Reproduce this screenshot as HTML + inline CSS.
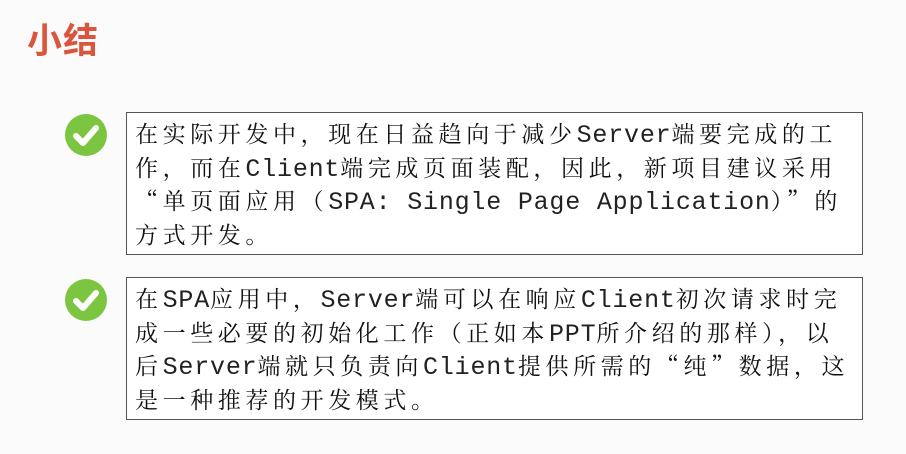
<!DOCTYPE html>
<html><head><meta charset="utf-8"><style>
body{margin:0;width:906px;height:454px;overflow:hidden;background:#fbfbfb;position:relative;font-family:"Noto Serif CJK SC","WenQuanYi Zen Hei",serif}
.t{position:absolute;left:27px;top:13px;font:bold 35px "Liberation Sans","Noto Sans CJK SC",sans-serif;color:#d9563c;letter-spacing:1px}
.box{position:absolute;left:126px;width:737px;height:143px;border:1.5px solid #555;background:#fff;box-sizing:border-box;padding:3px 0 0 8px}
.l{height:33.5px;line-height:33.5px;white-space:nowrap;font-size:23px;letter-spacing:4.6px;color:#111}
.m{font-family:"Liberation Mono",monospace;font-size:25px;letter-spacing:0.8px;color:#222}
.ck{position:absolute;left:65px;width:42px;height:42px;border-radius:50%;background:#7cc540}
.ck svg{position:absolute;left:0;top:0}
</style></head><body>
<div class="t">小结</div>
<div class="ck" style="top:114px"><svg width="42" height="42"><path d="M11 22 L18 29 L31 14" stroke="#fff" stroke-width="6" fill="none" stroke-linecap="round" stroke-linejoin="round"/></svg></div>
<div class="ck" style="top:279px"><svg width="42" height="42"><path d="M11 22 L18 29 L31 14" stroke="#fff" stroke-width="6" fill="none" stroke-linecap="round" stroke-linejoin="round"/></svg></div>
<div class="box" style="top:112px">
<div class="l">在实际开发中，现在日益趋向于减少<span class="m">Server</span>端要完成的工</div>
<div class="l">作，而在<span class="m">Client</span>端完成页面装配，因此，新项目建议采用</div>
<div class="l">“单页面应用（<span class="m">SPA: Single Page Application</span>）”的</div>
<div class="l">方式开发。</div>
</div>
<div class="box" style="top:277px">
<div class="l">在<span class="m">SPA</span>应用中，<span class="m">Server</span>端可以在响应<span class="m">Client</span>初次请求时完</div>
<div class="l">成一些必要的初始化工作（正如本<span class="m">PPT</span>所介绍的那样），以</div>
<div class="l">后<span class="m">Server</span>端就只负责向<span class="m">Client</span>提供所需的“纯”数据，这</div>
<div class="l">是一种推荐的开发模式。</div>
</div>
</body></html>
